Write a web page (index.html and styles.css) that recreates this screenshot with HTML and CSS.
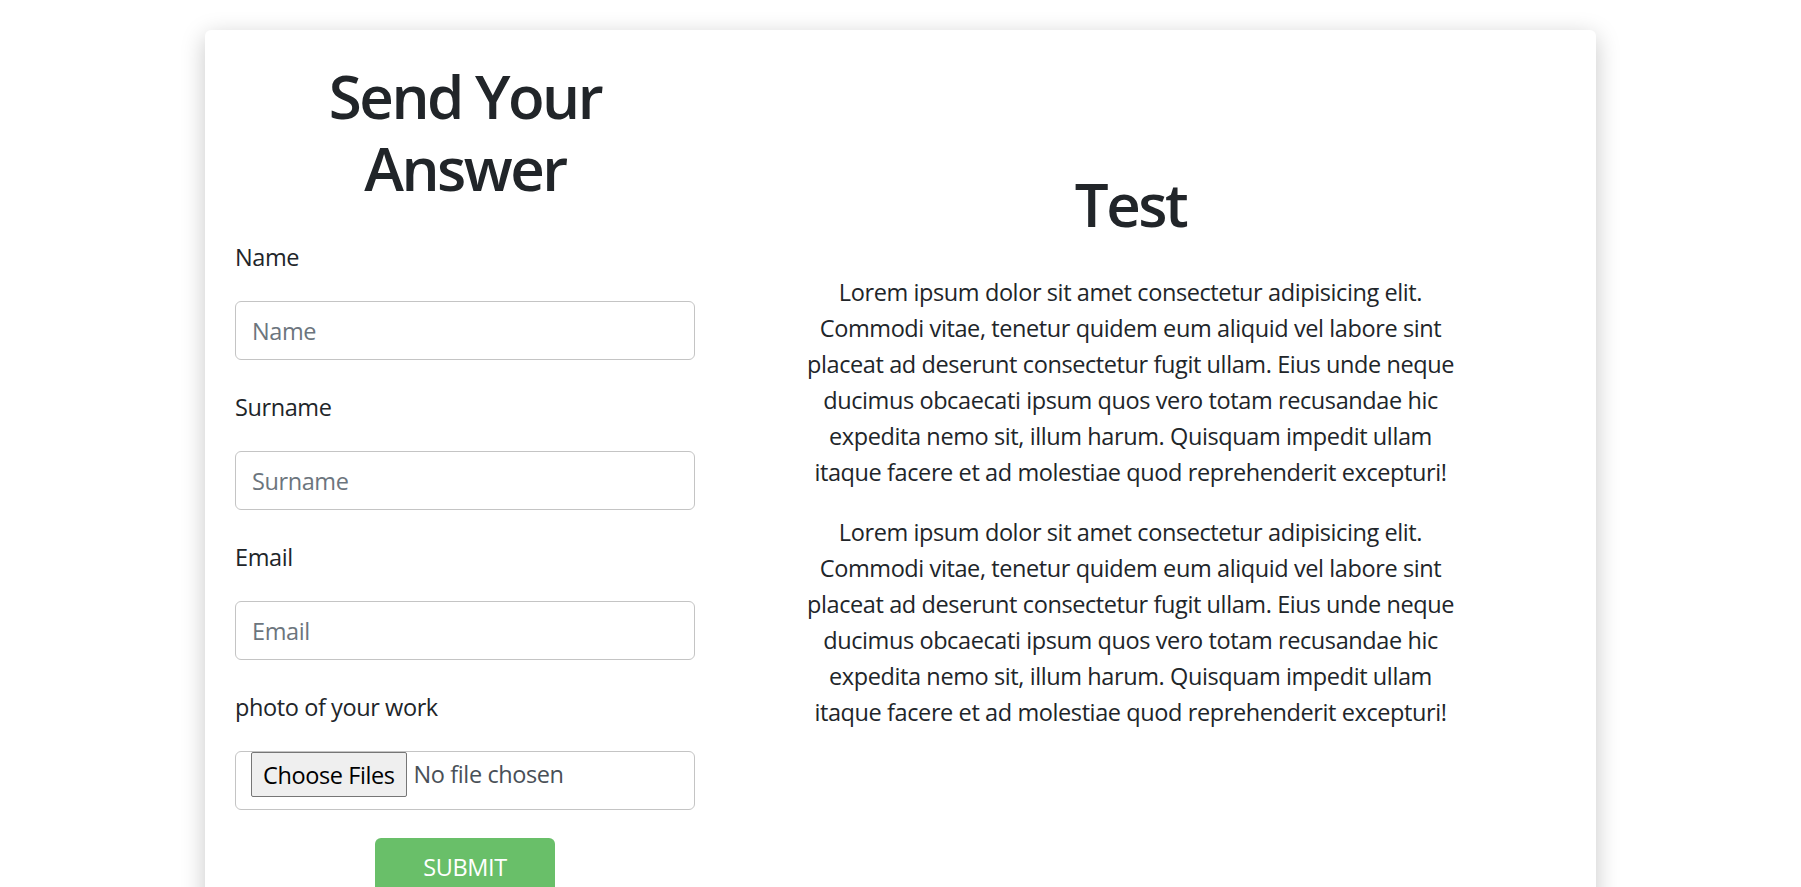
FILE: index.html
```html
<!DOCTYPE html>
<html lang="en">
<head>
<meta charset="utf-8">
<title>Send Your Answer</title>
<link rel="stylesheet" href="styles.css">
</head>
<body>
<main class="card">
  <section class="form-col">
    <h1 class="title">Send Your Answer</h1>
    <form class="answer-form">
      <div class="field">
        <label class="field-label" for="name">Name</label>
        <input class="field-input" id="name" type="text" placeholder="Name">
      </div>
      <div class="field">
        <label class="field-label" for="surname">Surname</label>
        <input class="field-input" id="surname" type="text" placeholder="Surname">
      </div>
      <div class="field">
        <label class="field-label" for="email">Email</label>
        <input class="field-input" id="email" type="email" placeholder="Email">
      </div>
      <div class="field">
        <label class="field-label" for="photo">photo of your work</label>
        <div class="file-field" id="photo">
          <button type="button" class="file-btn">Choose Files</button>
          <span class="file-status">No file chosen</span>
        </div>
      </div>
      <div class="submit-row">
        <button type="submit" class="submit-btn">SUBMIT</button>
      </div>
    </form>
  </section>
  <section class="info-col">
    <h1 class="title">Test</h1>
    <p class="info-text">Lorem ipsum dolor sit amet consectetur adipisicing elit. Commodi vitae, tenetur quidem eum aliquid vel labore sint placeat ad deserunt consectetur fugit ullam. Eius unde neque ducimus obcaecati ipsum quos vero totam recusandae hic expedita nemo sit, illum harum. Quisquam impedit ullam itaque facere et ad molestiae quod reprehenderit excepturi!</p>
    <p class="info-text">Lorem ipsum dolor sit amet consectetur adipisicing elit. Commodi vitae, tenetur quidem eum aliquid vel labore sint placeat ad deserunt consectetur fugit ullam. Eius unde neque ducimus obcaecati ipsum quos vero totam recusandae hic expedita nemo sit, illum harum. Quisquam impedit ullam itaque facere et ad molestiae quod reprehenderit excepturi!</p>
  </section>
</main>
</body>
</html>
```

FILE: styles.css
```css
* {
  box-sizing: border-box;
}

html, body {
  margin: 0;
  padding: 0;
  background: #ffffff;
}

body {
  font-family: "Open Sans", "Noto Sans", "Liberation Sans", sans-serif;
  font-size: 23.5px;
  line-height: 36px;
  letter-spacing: -0.4px;
  color: #212529;
}

.card {
  width: 1391px;
  margin: 30px auto 30px;
  padding: 30px;
  background: #ffffff;
  border-radius: 6px;
  box-shadow: 0 6px 24px rgba(0, 0, 0, 0.22);
  display: flex;
  align-items: flex-start;
}

.form-col {
  width: 460px;
  flex: 0 0 460px;
}

.info-col {
  flex: 1 1 auto;
  padding-top: 108px;
  display: flex;
  flex-direction: column;
  align-items: center;
  text-align: center;
}

.title {
  margin: 0;
  font-size: 60px;
  line-height: 72px;
  font-weight: 600;
  letter-spacing: -2.5px;
  text-align: center;
  color: #212529;
}

.form-col .title {
  margin-bottom: 35px;
  padding: 0 70px;
}

.info-col .title {
  margin-bottom: 34px;
}

.answer-form {
  display: flex;
  flex-direction: column;
}

.field {
  display: flex;
  flex-direction: column;
  margin-bottom: 29px;
}

.field-label {
  line-height: 36px;
  margin-bottom: 26px;
}

.field-input {
  height: 59px;
  width: 100%;
  padding: 0 16px;
  font-family: inherit;
  font-size: 23.5px;
  letter-spacing: inherit;
  color: #495057;
  background: #ffffff;
  border: 1px solid #c4c4c4;
  border-radius: 6px;
  outline: none;
}

.field-input::placeholder {
  color: #6c757d;
  opacity: 1;
}

.file-field {
  height: 59px;
  display: flex;
  align-items: flex-start;
  padding: 0 15px;
  border: 1px solid #c4c4c4;
  border-radius: 6px;
}

.file-btn {
  height: 45px;
  padding: 0 11px;
  font-family: inherit;
  font-size: 23.5px;
  letter-spacing: inherit;
  color: #000000;
  background: #efefef;
  border: 1px solid #767676;
  border-radius: 2px;
}

.file-status {
  margin-left: 7px;
  line-height: 45px;
  color: #495057;
}

.submit-row {
  display: flex;
  justify-content: center;
  margin-top: -1px;
}

.submit-btn {
  width: 180px;
  height: 57px;
  padding: 0;
  font-family: inherit;
  font-size: 23.5px;
  letter-spacing: inherit;
  line-height: 36px;
  color: #ffffff;
  background: #69bf69;
  border: none;
  border-radius: 6px;
}

.info-text {
  max-width: 660px;
  margin: 0 0 24px;
}
```
